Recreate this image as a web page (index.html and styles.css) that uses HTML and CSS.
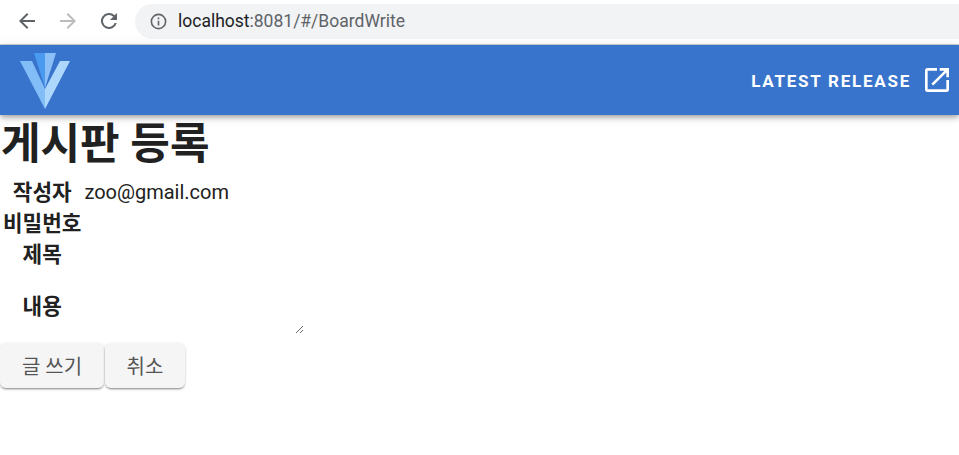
FILE: index.html
```html
<!DOCTYPE html>
<html lang="en">
<head>
<meta charset="UTF-8" />
<meta name="viewport" content="width=device-width, initial-scale=1" />
<title>BoardWrite</title>
<link rel="stylesheet" href="styles.css">
</head>
<body>

<div class="browser-bar">
  <svg class="nav-icon" viewBox="0 0 24 24"><path d="M20 11H7.8l5.6-5.6L12 4l-8 8 8 8 1.4-1.4L7.8 13H20z" fill="#5f6368"/></svg>
  <svg class="nav-icon" viewBox="0 0 24 24"><path d="M4 11h12.2l-5.6-5.6L12 4l8 8-8 8-1.4-1.4 5.6-5.6H4z" fill="#babcbe"/></svg>
  <svg class="nav-icon" viewBox="0 0 24 24"><path d="M17.65 6.35A8 8 0 1 0 19.73 14h-2.08a6 6 0 1 1-1.41-6.24L13 11h7V4z" fill="#5f6368"/></svg>
  <div class="url-box">
    <svg class="info-icon" viewBox="0 0 24 24"><path d="M11 7h2v2h-2zm0 4h2v6h-2zm1-9a10 10 0 1 0 0 20 10 10 0 0 0 0-20zm0 18a8 8 0 1 1 0-16 8 8 0 0 1 0 16z" fill="#5f6368"/></svg>
    <span class="host">localhost</span><span class="path">:8081/#/BoardWrite</span>
  </div>
</div>

<header class="app-bar">
  <svg class="logo" viewBox="0 0 50 56">
    <path d="M0 8H12L25 36V56z" fill="#82bdf8"/>
    <path d="M50 8H40L25 36V56z" fill="#aed7fd"/>
    <path d="M14 0H25V35z" fill="#4a9af0"/>
    <path d="M36 0H25V35z" fill="#8cc0f7"/>
  </svg>
  <a class="release" href="#">
    <span class="release-text">LATEST RELEASE</span>
    <svg class="open-icon" viewBox="0 0 24 24"><path d="M19 19H5V5h7V3H5a2 2 0 0 0-2 2v14a2 2 0 0 0 2 2h14a2 2 0 0 0 2-2v-7h-2zM14 3v2h3.6l-9.8 9.8 1.4 1.4L19 6.4V10h2V3z" fill="#fff"/></svg>
  </a>
</header>

<main>
  <h1>게시판 등록</h1>
  <form class="board-form">
    <table>
      <tr><th>작성자</th><td class="writer">zoo@gmail.com</td></tr>
      <tr><th>비밀번호</th><td><input type="password"></td></tr>
      <tr><th>제목</th><td><input type="text"></td></tr>
      <tr><th>내용</th><td><textarea></textarea></td></tr>
    </table>
    <div class="buttons">
      <button type="button" class="btn-write">글 쓰기</button>
      <button type="button" class="btn-cancel">취소</button>
    </div>
  </form>
</main>

</body>
</html>
```

FILE: styles.css
```css
* { box-sizing: border-box; }
html, body { height: 100%; overflow: hidden; }
body { margin: 0; background: #fff; color: #212121; font-family: Roboto, "Noto Sans CJK KR", sans-serif; }

.browser-bar { display: flex; align-items: center; height: 45px; padding: 0 0 2px 15px; background: #fff; border-bottom: 1px solid #d0d2d4; }
.nav-icon { width: 24px; height: 24px; margin-right: 17px; }
.url-box { display: flex; align-items: center; width: 824px; height: 35px; margin-left: -3px; padding-left: 14px; border-radius: 18px 0 0 18px; background: #f1f3f4; font-size: 17.5px; }
.info-icon { width: 19px; height: 19px; margin-right: 10px; }
.host { color: #202124; }
.path { color: #5f6368; }

.app-bar { display: flex; align-items: center; justify-content: space-between; height: 70px; padding: 0 6px 0 20px; background: #3874cb; box-shadow: 0 2px 4px -1px rgba(0,0,0,.2), 0 4px 5px rgba(0,0,0,.14), 0 1px 10px rgba(0,0,0,.12); position: relative; }
.logo { width: 50px; height: 56px; margin-top: 2px; }
.release { display: flex; align-items: center; gap: 10px; color: #fff; text-decoration: none; font-size: 17px; font-weight: 700; letter-spacing: 1.75px; }
.release-text { padding-top: 2px; }
.open-icon { width: 32px; height: 32px; }

h1 { margin: 0 0 4px; padding-left: 1px; font-size: 43px; line-height: 58px; font-weight: 700; }

table { border-collapse: separate; border-spacing: 2px 0; }
th { padding: 0 0 0 1px; font-size: 21.3px; font-weight: 700; line-height: 31px; text-align: center; vertical-align: middle; }
td { padding: 0 0 0 1px; font-size: 20px; line-height: 31px; }
input { display: block; width: 220px; height: 31px; padding: 0; border: 0; outline: 0; background: none; }
textarea { display: block; width: 220px; height: 63px; margin: 1px 0 9px; padding: 0; border: 0; outline: 0; background: none; }

.buttons { display: flex; gap: 1px; }
button { height: 45px; padding: 0 20px; border: 0; border-radius: 6px; background: #f5f5f5; color: #555; font: 400 20px Roboto, "Noto Sans CJK KR", sans-serif; box-shadow: 0 2px 2px -1px rgba(0,0,0,.35), 0 1px 3px rgba(0,0,0,.2); }
.btn-write { width: 104px; }
.btn-cancel { width: 80px; }
```
